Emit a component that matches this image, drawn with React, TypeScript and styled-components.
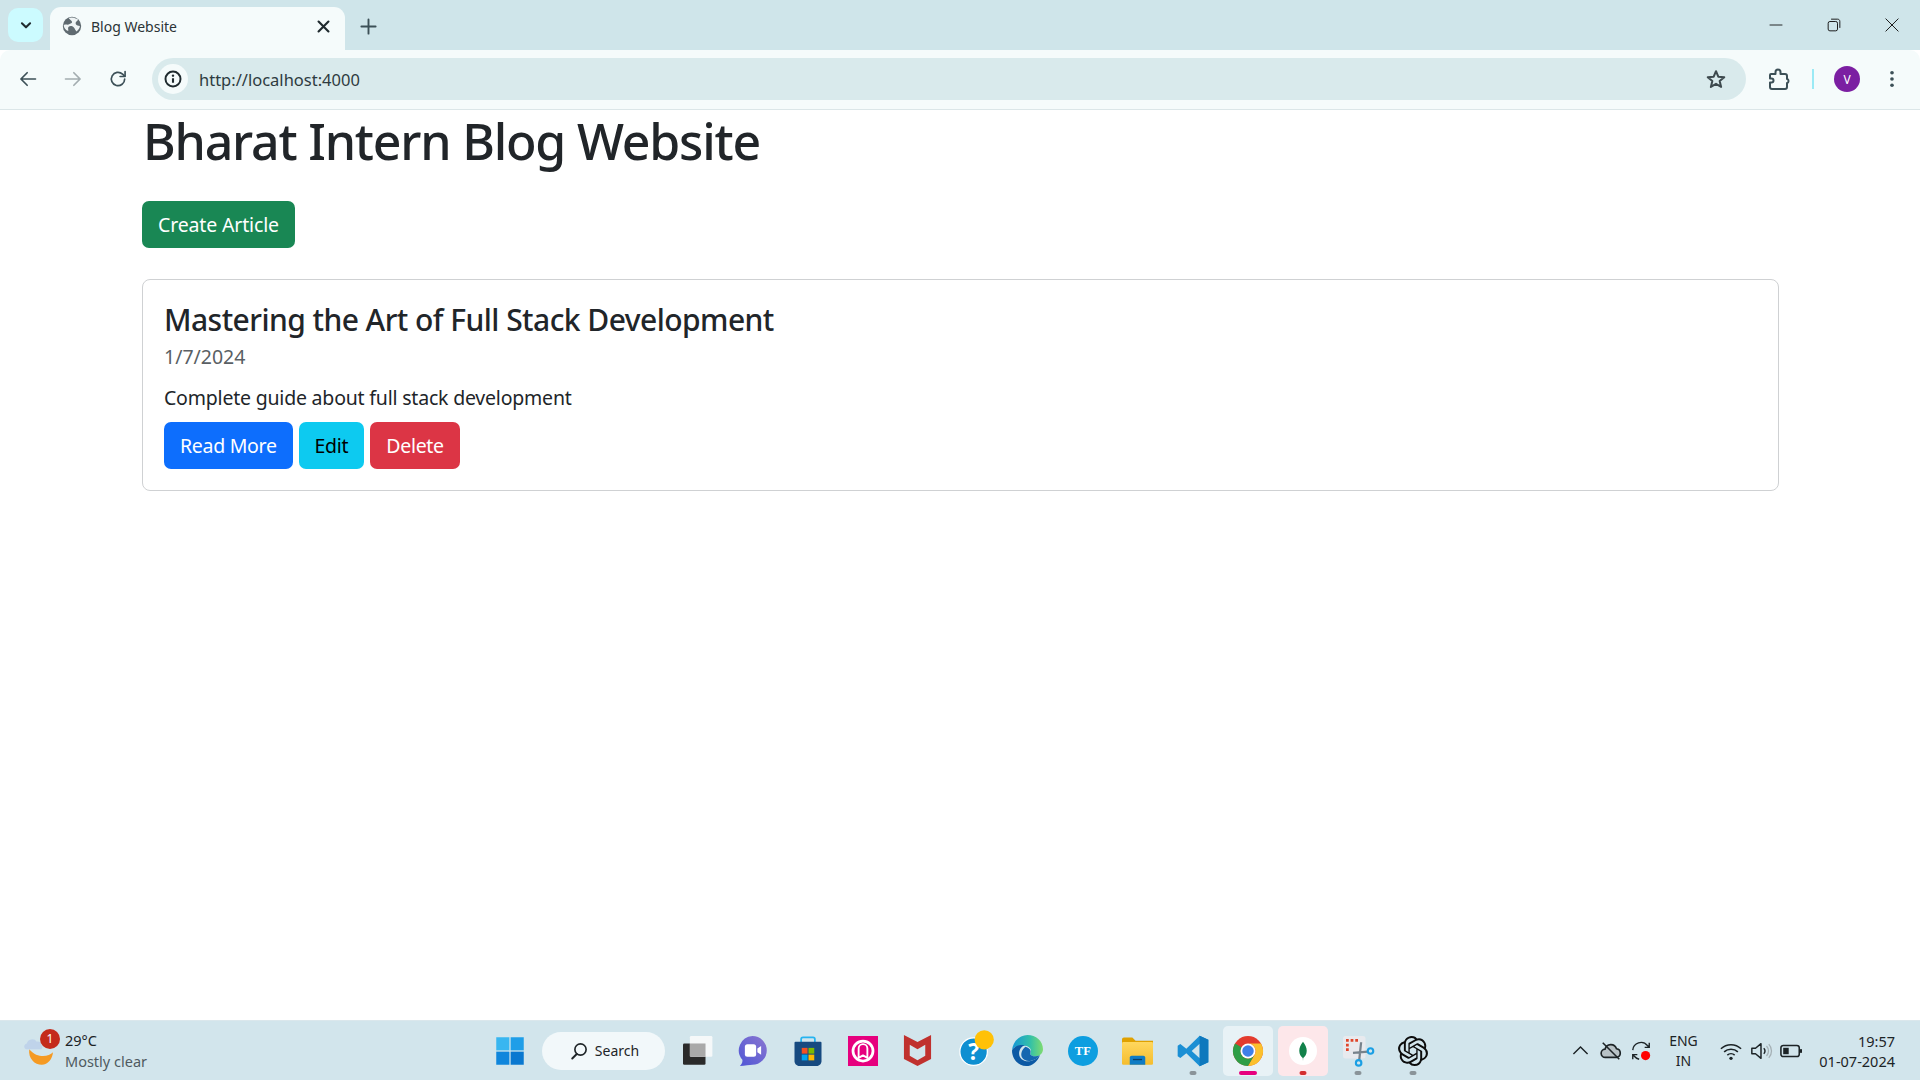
import React from 'react'
import styled, { createGlobalStyle } from 'styled-components'
import { SiOpenai } from 'react-icons/si'

const GlobalStyle = createGlobalStyle`
  html, body { margin: 0; padding: 0; height: 100%; background: #fff; }
  body { font-family: 'Noto Sans', 'Open Sans', sans-serif; color: #212529; overflow: hidden; }
  #root { height: 100%; }
`

const Screen = styled.div`
  display: flex;
  flex-direction: column;
  height: 1080px;
`

const TabStrip = styled.div`
  display: flex;
  align-items: flex-end;
  height: 50px;
  padding-left: 8px;
  background: #cfe5ea;
  flex: none;
`

const TabSearch = styled.div`
  display: flex;
  align-items: center;
  justify-content: center;
  width: 35px;
  height: 34px;
  margin: 0 7px 8px 0;
  border-radius: 10px;
  background: #ccfbff;
`

const Tab = styled.div`
  display: flex;
  align-items: center;
  width: 295px;
  height: 43px;
  padding: 0 13px 5px 12px;
  box-sizing: border-box;
  border-radius: 11px 11px 0 0;
  background: #f5fbfb;
  font-size: 14px;
  color: #2b3336;
`

const TabTitle = styled.span`
  flex: 1;
  margin-left: 9px;
`

const NewTab = styled.div`
  display: flex;
  align-items: center;
  width: 46px;
  height: 43px;
  padding: 0 0 5px 14px;
  box-sizing: border-box;
`

const WindowControls = styled.div`
  display: flex;
  align-items: center;
  align-self: stretch;
  margin-left: auto;
  margin-right: -1px;
`

const WindowButton = styled.div`
  display: flex;
  align-items: center;
  justify-content: center;
  width: 58px;
`

const Toolbar = styled.div`
  display: flex;
  align-items: center;
  height: 60px;
  flex: none;
  box-sizing: border-box;
  padding: 0 0 1px 5.5px;
  background: #f5fbfb;
  border-bottom: 1px solid #dbe6e8;
  border-radius: 10px 10px 0 0;
`

const NavButton = styled.div`
  display: flex;
  align-items: center;
  justify-content: center;
  width: 45px;
`

const Omnibox = styled.div`
  display: flex;
  align-items: center;
  width: 1594px;
  height: 42px;
  margin-left: 11.5px;
  padding: 0 19px 0 6px;
  box-sizing: border-box;
  border-radius: 21px;
  background: #d9eaec;
`

const InfoChip = styled.div`
  display: flex;
  align-items: center;
  justify-content: center;
  width: 30px;
  height: 30px;
  border-radius: 50%;
  background: #f5fbfb;
`

const Url = styled.span`
  flex: 1;
  margin-left: 11px;
  font-size: 16.500px;
  color: #2e3b40;
`

const ToolbarEnd = styled.div`
  display: flex;
  align-items: center;
  gap: 21px;
  margin-left: 21px;
`

const Divider = styled.div`
  width: 2px;
  height: 20px;
  background: #9beaf5;
`

const Avatar = styled.div`
  display: flex;
  align-items: center;
  justify-content: center;
  width: 26px;
  height: 26px;
  margin-left: -1px;
  margin-right: 1px;
  border-radius: 50%;
  background: #7b1fa2;
  color: #fff;
  font-size: 12px;
`

const Page = styled.main`
  flex: 1;
  padding: 1px 141px 0 142px;
`

const Heading = styled.h1`
  margin: 0 0 30px 1px;
  font-size: 50px;
  line-height: 60px;
  font-weight: 500;
  letter-spacing: -1.2px;
  color: #212529;
`

const Button = styled.a<{ $bg: string; $fg?: string }>`
  display: inline-flex;
  align-items: center;
  justify-content: center;
  height: 47px;
  padding: 0 16px;
  box-sizing: border-box;
  border-radius: 7px;
  background: ${({ $bg }) => $bg};
  color: ${({ $fg }) => $fg || '#fff'};
  font-size: 19.500px;
  letter-spacing: -0.3px;
`

const CreateButton = styled(Button)`
  letter-spacing: -0.15px;
`

const Card = styled.article`
  margin-top: 31px;
  height: 212px;
  box-sizing: border-box;
  padding: 22px 21px 0;
  border: 1px solid #cfd1d3;
  border-radius: 8px;
`

const CardTitle = styled.h5`
  margin: 0;
  font-size: 30px;
  line-height: 36px;
  font-weight: 500;
  letter-spacing: -0.55px;
`

const CardDate = styled.div`
  margin-top: 4px;
  font-size: 19.500px;
  line-height: 30px;
  color: #5a5f64;
`

const CardText = styled.p`
  margin: 11px 0 0;
  font-size: 19.500px;
  line-height: 30px;
  letter-spacing: -0.2px;
`

const CardActions = styled.div`
  display: flex;
  gap: 6px;
  margin-top: 9px;
`

const Taskbar = styled.footer`
  display: flex;
  align-items: center;
  height: 60px;
  flex: none;
  box-sizing: border-box;
  border-top: 1px solid #dbe7ec;
  background: #d2e5ec;
`

const Weather = styled.div`
  position: relative;
  display: flex;
  align-items: center;
  width: 482px;
  padding-left: 23px;
  box-sizing: border-box;
`

const WeatherBadge = styled.span`
  position: absolute;
  left: 40px;
  top: -1px;
  width: 20px;
  height: 20px;
  border-radius: 50%;
  background: #c42b1c;
  color: #fff;
  font-size: 12px;
  line-height: 20px;
  text-align: center;
`

const WeatherText = styled.div`
  margin-left: 12px;
  font-size: 14.500px;
  line-height: 21px;
  color: #1c2326;
`

const WeatherSub = styled.div`
  color: #4f5a60;
`

const Slot = styled.div<{ $bg?: string; $mark?: string; $markWide?: boolean }>`
  position: relative;
  display: flex;
  align-items: center;
  justify-content: center;
  width: 50px;
  height: 50px;
  margin: 0 2.5px;
  border-radius: 5px;
  background: ${({ $bg }) => $bg || 'transparent'};

  &::after {
    content: '';
    display: ${({ $mark }) => ($mark ? 'block' : 'none')};
    position: absolute;
    bottom: 1px;
    left: 50%;
    transform: translateX(-50%);
    width: ${({ $markWide }) => ($markWide ? '18px' : '7px')};
    height: 4px;
    border-radius: 2px;
    background: ${({ $mark }) => $mark};
  }
`

const SearchPill = styled.div`
  display: flex;
  align-items: center;
  justify-content: center;
  gap: 7px;
  width: 123px;
  height: 38px;
  margin: 0 5px;
  padding-left: 2px;
  box-sizing: border-box;
  border-radius: 19px;
  background: #f2f8fa;
  font-size: 14px;
  color: #1f2528;
`

const Tray = styled.div`
  display: flex;
  align-items: center;
  margin-left: auto;
  padding-right: 25px;
`

const TrayIcon = styled.div`
  display: flex;
  align-items: center;
  justify-content: center;
  width: 30px;
`

const Lang = styled.div`
  width: 56px;
  margin-right: 4px;
  text-align: center;
  font-size: 14px;
  line-height: 20px;
  color: #1c2326;
`

const Clock = styled.div`
  width: 89.500px;
  text-align: right;
  font-size: 14.500px;
  line-height: 20px;
  color: #1c2326;
`

const Svg = styled.svg`
  overflow: visible;
  flex: none;
`

const Icon = ({ size = 20, children }: { size?: number; children: React.ReactNode }) => (
  <Svg width={size} height={size} viewBox="0 0 24 24" fill="none">
    {children}
  </Svg>
)

const stroke = { stroke: '#3c5057', strokeWidth: 2, strokeLinecap: 'round', strokeLinejoin: 'round' } as const

const taskIcons: { key: string; bg?: string; mark?: string; wide?: boolean; icon: React.ReactNode }[] = [
  {
    key: 'chat',
    icon: (
      <Icon size={30}>
        <defs>
          <linearGradient id="chatFill" x1="0" y1="1" x2="1" y2="0">
            <stop offset="0" stopColor="#4f56d6" />
            <stop offset="1" stopColor="#8a76d0" />
          </linearGradient>
        </defs>
        <path d="M11.500 0a11.500 11.500 0 0 1 0 23c-2 0-6 .7-10 1 1.500-1.500 2.300-3 2-5A11.500 11.500 0 0 1 11.500 0z" fill="url(#chatFill)" />
        <rect x="5.500" y="6.500" width="9" height="10" rx="2" fill="#fff" />
        <path d="M15.500 10l3-2v7l-3-2z" fill="#fff" />
      </Icon>
    ),
  },
  {
    key: 'store',
    icon: (
      <Icon size={30}>
        <path d="M6.500 5V2.500C6.500 1.500 7.200 1 8 1h8c.8 0 1.500.5 1.500 1.500V5" stroke="#27b4f0" strokeWidth="1.400" />
        <path d="M2 4.500h20c.5 0 .8.300.8.800V20c0 2-1.500 4-4 4H5.200c-2.500 0-4-2-4-4V5.300c0-.5.300-.8.800-.8z" fill="#174a80" />
        <rect x="7" y="9.500" width="4.600" height="4.600" fill="#f25022" />
        <rect x="12.400" y="9.500" width="4.600" height="4.600" fill="#7fba00" />
        <rect x="7" y="14.900" width="4.600" height="4.600" fill="#00a4ef" />
        <rect x="12.400" y="14.900" width="4.600" height="4.600" fill="#ffb900" />
      </Icon>
    ),
  },
  {
    key: 'pink',
    icon: (
      <Icon size={30}>
        <rect width="24" height="24" fill="#e6007e" />
        <circle cx="12" cy="12" r="8" stroke="#fff" strokeWidth="2.200" />
        <path d="M8.500 17.500V10c0-2 1.500-3.500 3.500-3.500s3.500 1.500 3.500 3.500v7.500L12 15.500z" stroke="#fff" strokeWidth="1.500" strokeLinejoin="round" />
      </Icon>
    ),
  },
  {
    key: 'shield',
    icon: (
      <Icon size={31}>
        <path d="M1.500 0l10.500 5.500L22.500 0v18.500L12 24 1.500 18.500z" fill="#c0312e" />
        <path d="M6 7.500l6 3.500 6-3.500v8.500l-6 3.500-6-3.500z" fill="#d2e5ec" />
      </Icon>
    ),
  },
  {
    key: 'help',
    icon: (
      <Icon size={30}>
        <circle cx="12.500" cy="12.500" r="11" fill="#0e8fd1" stroke="#fff" strokeWidth="1" />
        <text x="12.500" y="19" textAnchor="middle" fontFamily="'Noto Sans', sans-serif" fontWeight="700" fontSize="18" fill="#fff">
          ?
        </text>
        <circle cx="21" cy="3" r="7.700" fill="#ffc107" />
      </Icon>
    ),
  },
  {
    key: 'edge',
    icon: (
      <Icon size={31}>
        <defs>
          <linearGradient id="edgeTop" x1="0" y1="0.5" x2="1" y2="0.5">
            <stop offset="0" stopColor="#1496d8" />
            <stop offset="0.6" stopColor="#35c1a6" />
            <stop offset="1" stopColor="#7fdc70" />
          </linearGradient>
        </defs>
        <path d="M12 0c6.500 0 12 4.500 12 11 0 3.500-3 5.500-6 5.500-2 0-4-.8-4-2 1.500-2 .5-5-2.500-6C7 7.500 2 8 0 12 .5 5 6 0 12 0z" fill="url(#edgeTop)" />
        <path d="M0 12c1.500-3.500 6.500-5 10-4-3 1-4.500 3.500-4.500 6.500 0 4 4.500 7 9.500 5.500 2.500-.7 4.500-2 6.500-4-2 5-6 8-10.500 8C5 24 0 18.500 0 12z" fill="#0c59a4" />
        <path d="M14 14.500c0 1.200 2 2 4 2 1.300 0 2.600-.4 3.800-1-2 2.500-4.500 4-7 4.500-3 .6-5.800-.5-7-2.500-1.500-3 0-6.500 2.700-8.500 2.500 .8 5 2.500 3.500 5.500z" fill="#1466b0" />
      </Icon>
    ),
  },
  {
    key: 'tf',
    icon: (
      <Icon size={30}>
        <circle cx="12" cy="12" r="12" fill="#0d9ee0" />
        <text x="12" y="15.500" textAnchor="middle" fontFamily="'Liberation Serif', serif" fontWeight="700" fontSize="10" letterSpacing="0.3" fill="#fff">
          TF
        </text>
      </Icon>
    ),
  },
  {
    key: 'folder',
    icon: (
      <Icon size={31}>
        <defs>
          <linearGradient id="folderFill" x1="0" y1="0" x2="0" y2="1">
            <stop offset="0" stopColor="#ffd75e" />
            <stop offset="1" stopColor="#f5bd2e" />
          </linearGradient>
        </defs>
        <path d="M0 3.500C0 2.700.700 2 1.500 2h6.500L10.500 4.500H24v3H0z" fill="#e0a100" />
        <rect x="0" y="5.500" width="24" height="17.500" rx="1" fill="url(#folderFill)" />
        <path d="M6 23v-5.500c0-.8.700-1.500 1.500-1.500h9c.8 0 1.500.7 1.500 1.500V23z" fill="#0f7cc4" />
        <rect x="8.500" y="18.500" width="7" height="1" fill="#0b3f66" />
      </Icon>
    ),
  },
  {
    key: 'vscode',
    mark: '#8a9499',
    icon: (
      <Icon size={32}>
        <path d="M17 .5l6.500 3v17l-6.500 3L7 13.700 2.500 17.200.5 16V8l2-1.200L7 10.300zM17 6.500L11 12l6 5.500z" fillRule="evenodd" fill="#1b8fd4" />
        <path d="M17 .5l6.500 3v17l-6.500 3z" fill="#0e78bd" />
      </Icon>
    ),
  },
  {
    key: 'chrome',
    bg: '#e8f2f6',
    mark: '#e6007e',
    wide: true,
    icon: (
      <Icon size={30}>
        <circle cx="12" cy="12" r="12" fill="#e33b2e" />
        <path d="M22.400 6A12 12 0 0 1 12 24l5.200-9A6 6 0 0 0 12 6z" fill="#fbc02d" />
        <path d="M1.600 6A12 12 0 0 0 12 24l5.200-9a6 6 0 0 1-10.400-6z" fill="#2e9e46" />
        <circle cx="12" cy="12" r="6" fill="#fff" />
        <circle cx="12" cy="12" r="4.600" fill="#3f7fe8" />
      </Icon>
    ),
  },
  {
    key: 'mongo',
    bg: '#fde7ea',
    mark: '#d32f2f',
    icon: (
      <Icon size={28}>
        <circle cx="12" cy="12" r="12" fill="#fff" />
        <path d="M12 4c2 2.500 3.200 5 3.200 7.800 0 3-1.500 5-3 6.200l-.2 2.500-.2-2.500c-1.500-1.200-3-3.200-3-6.200C8.800 9 10 6.500 12 4z" fill="#12814a" />
      </Icon>
    ),
  },
  {
    key: 'snip',
    mark: '#8a9499',
    icon: (
      <Icon size={30}>
        <rect x="0" y="0" width="18" height="18" rx="2" fill="#e8eaee" />
        <path d="M3.500 12V3.500H12" stroke="#e0452a" strokeWidth="2.200" strokeDasharray="2.200 1.500" />
        <path d="M14.500 5l-1.500 14M8 13.500l12-1" stroke="#77838c" strokeWidth="1.800" />
        <circle cx="12.500" cy="21.500" r="2.200" stroke="#1b9fe4" strokeWidth="1.700" />
        <circle cx="22" cy="12" r="2.200" stroke="#1b9fe4" strokeWidth="1.700" />
      </Icon>
    ),
  },
  {
    key: 'gpt',
    mark: '#8a9499',
    icon: <SiOpenai size={30} color="#0d0d0d" />,
  },
]

export default function App() {
  return (
    <Screen>
      <GlobalStyle />
      <TabStrip>
        <TabSearch>
          <Icon size={14}>
            <path d="M5 9l7 7 7-7" stroke="#1f2a2e" strokeWidth="3.500" strokeLinecap="round" strokeLinejoin="round" />
          </Icon>
        </TabSearch>
        <Tab>
          <Icon size={20}>
            <circle cx="12" cy="12" r="11" fill="#5f6a70" />
            <path d="M8 2.500c1 2 3.500 2.500 4 4.500s-2 2-3.500 3S4 9.500 2 11c0 3 2.500 6 5.500 7 .5-2-1-3.500 .5-5s4.500-1 6 .5 2 4 3.500 5c2-1.500 4-4 4-6.500-2-.5-4-.5-5-2.500s1.500-3.500 3-5C18 3.500 13 .5 8 2.500z" fill="#f5fbfb" opacity="0.95" />
          </Icon>
          <TabTitle>Blog Website</TabTitle>
          <Icon size={17}>
            <path d="M5 5l14 14M19 5L5 19" stroke="#1f2a2e" strokeWidth="3" strokeLinecap="round" />
          </Icon>
        </Tab>
        <NewTab>
          <Icon size={19}>
            <path d="M12 3v18M3 12h18" stroke="#3c5057" strokeWidth="2.400" strokeLinecap="round" />
          </Icon>
        </NewTab>
        <WindowControls>
          <WindowButton>
            <Icon size={14}>
              <path d="M1 12h22" stroke="#1b1b1b" strokeWidth="1.600" />
            </Icon>
          </WindowButton>
          <WindowButton>
            <Icon size={14}>
              <rect x="2" y="6" width="16" height="16" rx="3" stroke="#1b1b1b" strokeWidth="1.700" />
              <path d="M7 2h11c2.500 0 4 1.500 4 4v11" stroke="#1b1b1b" strokeWidth="1.700" />
            </Icon>
          </WindowButton>
          <WindowButton>
            <Icon size={14}>
              <path d="M1 1l22 22M23 1L1 23" stroke="#1b1b1b" strokeWidth="1.700" />
            </Icon>
          </WindowButton>
        </WindowControls>
      </TabStrip>

      <Toolbar>
        <NavButton>
          <Icon size={20}>
            <path d="M21 12H4M11 4.500L3.500 12l7.500 7.500" {...stroke} />
          </Icon>
        </NavButton>
        <NavButton>
          <Icon size={20}>
            <path d="M3 12h17M13 4.500l7.500 7.500-7.500 7.500" {...stroke} stroke="#a3adb0" />
          </Icon>
        </NavButton>
        <NavButton>
          <Icon size={20}>
            <path d="M20 12a8 8 0 1 1-2.500-5.800L20 8.500" {...stroke} strokeLinejoin="miter" />
            <path d="M20.500 3v6h-6" {...stroke} />
          </Icon>
        </NavButton>
        <Omnibox>
          <InfoChip>
            <Icon size={18}>
              <circle cx="12" cy="12" r="10" stroke="#1f2a2e" strokeWidth="2.600" />
              <path d="M12 11v6" stroke="#1f2a2e" strokeWidth="2.800" />
              <circle cx="12" cy="7.500" r="1.600" fill="#1f2a2e" />
            </Icon>
          </InfoChip>
          <Url>http://localhost:4000</Url>
          <Icon size={22}>
            <path d="M12 3.500l2.500 6 6.500.5-5 4.300 1.600 6.300L12 17.200l-5.600 3.400L8 14.300 3 10l6.500-.5z" stroke="#3e4a4e" strokeWidth="2.200" strokeLinejoin="round" />
          </Icon>
        </Omnibox>
        <ToolbarEnd>
          <Icon size={24}>
            <path d="M4 7h4.500V5a2.500 2.500 0 0 1 5 0v2H18c1.200 0 2 .8 2 2v3h.5a2.500 2.500 0 0 1 0 4H20v4c0 1.200-.8 2-2 2H5c-1.200 0-2-.8-2-2v-4.500h1.500a2 2 0 0 0 0-4H3V8c0-.5.500-1 1-1z" stroke="#3c5057" strokeWidth="2" strokeLinejoin="round" />
          </Icon>
          <Divider />
          <Avatar>V</Avatar>
          <Icon size={20}>
            <circle cx="12" cy="4.500" r="2.200" fill="#3c5057" />
            <circle cx="12" cy="12" r="2.200" fill="#3c5057" />
            <circle cx="12" cy="19.500" r="2.200" fill="#3c5057" />
          </Icon>
        </ToolbarEnd>
      </Toolbar>

      <Page>
        <Heading>Bharat Intern Blog Website</Heading>
        <CreateButton $bg="#198754">Create Article</CreateButton>
        <Card>
          <CardTitle>Mastering the Art of Full Stack Development</CardTitle>
          <CardDate>1/7/2024</CardDate>
          <CardText>Complete guide about full stack development</CardText>
          <CardActions>
            <Button $bg="#0d6efd">Read More</Button>
            <Button $bg="#0dcaf0" $fg="#000">
              Edit
            </Button>
            <Button $bg="#dc3545">Delete</Button>
          </CardActions>
        </Card>
      </Page>

      <Taskbar>
        <Weather>
          <Icon size={30}>
            <path d="M5 10.500C4 18 9.500 23 15 23c5 0 8.500-4.500 9-10-3.500 3.500-12 5.500-19-2.500z" fill="#f59a23" />
            <path d="M1.500 10a2.500 2.500 0 0 1 1.500-4 4.500 4.500 0 0 1 8-1.500 3 3 0 0 1 3.500 2.500 2 2 0 0 1 0 3.500H2.500z" fill="#bfd3ea" />
          </Icon>
          <WeatherBadge>1</WeatherBadge>
          <WeatherText>
            29°C
            <WeatherSub>Mostly clear</WeatherSub>
          </WeatherText>
        </Weather>
        <Slot>
          <Icon size={30}>
            <path d="M1 1h10.500v10.500H1z" fill="#38b6f0" />
            <path d="M12.500 1H23v10.500H12.500z" fill="#1f9ee8" />
            <path d="M1 12.500h10.500V23H1z" fill="#0f86dc" />
            <path d="M12.500 12.500H23V23H12.500z" fill="#0a78d0" />
          </Icon>
        </Slot>
        <SearchPill>
          <Icon size={18}>
            <circle cx="14" cy="10" r="7.500" stroke="#1f2528" strokeWidth="2.200" />
            <path d="M9 16l-6 6" stroke="#1f2528" strokeWidth="2.600" strokeLinecap="round" />
          </Icon>
          Search
        </SearchPill>
        <Slot>
          <Icon size={30}>
            <rect x="0" y="6" width="18" height="17" rx="1" fill="#2a2a2a" />
            <rect x="5.500" y="0" width="18" height="16.500" rx="1" fill="#f7f9fa" opacity="0.95" />
            <rect x="5.500" y="6" width="12.500" height="10.500" fill="#a9a9a9" />
          </Icon>
        </Slot>
        {taskIcons.map(({ key, bg, mark, wide, icon }) => (
          <Slot key={key} $bg={bg} $mark={mark} $markWide={wide}>
            {icon}
          </Slot>
        ))}
        <Tray>
          <TrayIcon>
            <Icon size={17}>
              <path d="M2 17L12 7l10 10" stroke="#1c2326" strokeWidth="2" />
            </Icon>
          </TrayIcon>
          <TrayIcon>
            <Icon size={22}>
              <path d="M6 19a4.500 4.500 0 0 1-.5-9 6.500 6.500 0 0 1 12.500-.5 4.800 4.800 0 0 1 0 9.500z" fill="#b8c2c6" stroke="#1c2326" strokeWidth="1.800" />
              <path d="M3 3l18 18" stroke="#1c2326" strokeWidth="1.800" />
            </Icon>
          </TrayIcon>
          <TrayIcon>
            <Icon size={22}>
              <path d="M3 11a9 9 0 0 1 16-5l2 2M21 3v5h-5" stroke="#1c2326" strokeWidth="1.500" />
              <path d="M10 21a9 9 0 0 1-5-3l-2-2M3 21v-5h5" stroke="#1c2326" strokeWidth="1.500" />
              <circle cx="17" cy="17" r="5" fill="#f00" />
            </Icon>
          </TrayIcon>
          <Lang>
            ENG
            <br />
            IN
          </Lang>
          <TrayIcon>
            <Icon size={22}>
              <path d="M1 9.500a16 16 0 0 1 22 0M4.500 13a11 11 0 0 1 15 0M8 16.500a6 6 0 0 1 8 0" stroke="#1c2326" strokeWidth="1.700" />
              <circle cx="12" cy="20" r="1.800" fill="#1c2326" />
            </Icon>
          </TrayIcon>
          <TrayIcon>
            <Icon size={22}>
              <path d="M2 9v6h4l6 5V4L6 9z" stroke="#1c2326" strokeWidth="1.600" strokeLinejoin="round" />
              <path d="M15 9a4 4 0 0 1 0 6" stroke="#1c2326" strokeWidth="1.600" />
              <path d="M18 6.500a8 8 0 0 1 0 11M20.500 4.500a11 11 0 0 1 0 15" stroke="#a5b0b5" strokeWidth="1.400" />
            </Icon>
          </TrayIcon>
          <TrayIcon>
            <Icon size={22}>
              <rect x="1" y="6" width="20" height="12" rx="2.500" stroke="#1c2326" strokeWidth="1.700" />
              <rect x="3.500" y="8.500" width="6" height="7" fill="#1c2326" />
              <rect x="21.500" y="10" width="2.500" height="4" fill="#1c2326" />
            </Icon>
          </TrayIcon>
          <Clock>
            19:57
            <br />
            01-07-2024
          </Clock>
        </Tray>
      </Taskbar>
    </Screen>
  )
}
